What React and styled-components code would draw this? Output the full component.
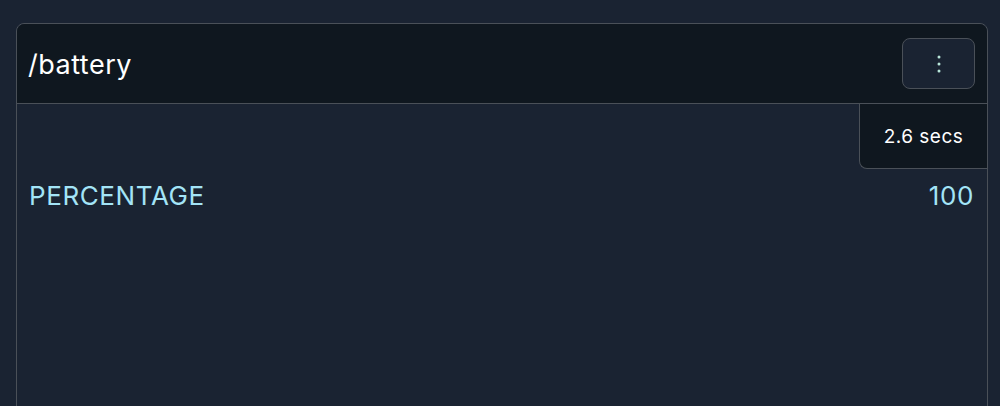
import React from "react";
import styled, { createGlobalStyle } from "styled-components";

const GlobalStyle = createGlobalStyle`
  html, body {
    margin: 0;
    padding: 0;
    background: #1a2332;
    font-family: Inter, "Noto Sans", sans-serif;
  }
`;

const Page = styled.div`
  padding: 23px 12px 0 16px;
  height: 406px;
  box-sizing: border-box;
  overflow: hidden;
`;

const Card = styled.div`
  border: 1px solid #4a5058;
  border-radius: 8px;
  background: #1a2332;
  height: 420px;
  display: flex;
  flex-direction: column;
`;

const Header = styled.div`
  display: flex;
  align-items: center;
  justify-content: space-between;
  height: 79px;
  padding: 0 12px 0 11px;
  background: #0f171f;
  border-bottom: 1px solid #4a5058;
  border-radius: 8px 8px 0 0;
`;

const Title = styled.h2`
  margin: 2px 0 0;
  font-size: 27px;
  letter-spacing: 0.5px;
  font-weight: 400;
  color: #ffffff;
`;

const MenuButton = styled.button`
  width: 73px;
  height: 51px;
  border: 1px solid #4a5058;
  border-radius: 8px;
  background: #1a2332;
  display: flex;
  align-items: center;
  justify-content: center;
  padding: 0;
  cursor: pointer;
`;

const Body = styled.div`
  display: flex;
  flex-direction: column;
`;

const TimeBadge = styled.div`
  align-self: flex-end;
  width: 128px;
  height: 65px;
  box-sizing: border-box;
  display: flex;
  align-items: center;
  justify-content: center;
  background: #0f171f;
  border-left: 1px solid #4a5058;
  border-bottom: 1px solid #4a5058;
  border-bottom-left-radius: 8px;
  color: #ffffff;
  font-size: 19px;
  letter-spacing: 0.5px;
`;

const Row = styled.div`
  display: flex;
  justify-content: space-between;
  align-items: center;
  padding: 11px 13px 0 12px;
  font-size: 26px;
  letter-spacing: 0.6px;
  color: #a3e4f7;
`;

const Dots = () => (
  <svg width="4" height="18" viewBox="0 0 4 18">
    <circle cx="2" cy="2" r="1.5" fill="#b8e6d9" />
    <circle cx="2" cy="9" r="1.5" fill="#b8e6d9" />
    <circle cx="2" cy="16" r="1.5" fill="#b8e6d9" />
  </svg>
);

export default function App() {
  return (
    <>
      <GlobalStyle />
      <Page>
        <Card>
          <Header>
            <Title>/battery</Title>
            <MenuButton aria-label="menu">
              <Dots />
            </MenuButton>
          </Header>
          <Body>
            <TimeBadge>2.6 secs</TimeBadge>
            <Row>
              <span>PERCENTAGE</span>
              <span>100</span>
            </Row>
          </Body>
        </Card>
      </Page>
    </>
  );
}
